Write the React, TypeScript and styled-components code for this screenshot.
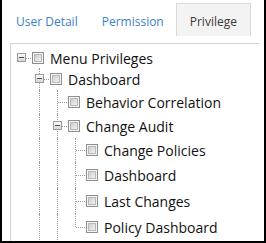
import React from 'react';
import styled, { createGlobalStyle, css } from 'styled-components';

const Global = createGlobalStyle`
  html, body { margin: 0; padding: 0; background: #fff; }
  body { font-family: 'Open Sans', 'Noto Sans', sans-serif; }
`;

const Frame = styled.div`
  width: 266px;
  height: 243px;
  box-sizing: border-box;
  border: 2px solid #000;
  border-top: none;
  background: #fff;
  display: flex;
  flex-direction: column;
  padding: 3px 0 0 2px;
  overflow: hidden;
`;

const TabBar = styled.div`
  display: flex;
  height: 33px;
  gap: 1px;
`;

const Tab = styled.div<{ $active?: boolean }>`
  display: flex;
  align-items: center;
  padding: 3px 10px 0 11px;
  box-sizing: border-box;
  font-size: 12px;
  color: #3b7fc4;
  border: 1px solid transparent;
  border-bottom: none;
  white-space: nowrap;
  ${(p) =>
    p.$active &&
    css`
      padding: 3px 13px 0;
      color: #3a3a3a;
      background: #f3f3f3;
      border-color: #d9d9d9;
    `}
`;

const Panel = styled.div`
  margin: 7px 0 0 6px;
  width: 249px;
  flex: 1;
  border-top: 1px solid #d4d4d4;
  border-left: 1px solid #d4d4d4;
  padding: 4px 0 0 1px;
  box-sizing: border-box;
`;

const Row = styled.div<{ $h: number }>`
  display: flex;
  align-items: stretch;
  height: ${(p) => p.$h}px;
`;

const Guide = styled.div<{ $on: boolean }>`
  width: 18px;
  flex: none;
  position: relative;
  ${(p) =>
    p.$on &&
    css`
      &::before {
        content: '';
        position: absolute;
        left: 9px;
        top: 0;
        bottom: 0;
        border-left: 1px dotted #9a9a9a;
      }
    `}
`;

const Stub = styled.div<{ $up: boolean; $down: boolean }>`
  width: 18px;
  flex: none;
  position: relative;
  &::before {
    content: '';
    position: absolute;
    left: 9px;
    top: ${(p) => (p.$up ? '0' : '50%')};
    bottom: ${(p) => (p.$down ? '0' : '50%')};
    border-left: 1px dotted #9a9a9a;
  }
  &::after {
    content: '';
    position: absolute;
    left: 10px;
    right: -1px;
    top: 50%;
    border-top: 1px dotted #9a9a9a;
  }
`;

const Expander = styled.span`
  position: absolute;
  z-index: 1;
  left: 5px;
  top: 50%;
  margin-top: -5px;
  width: 9px;
  height: 9px;
  box-sizing: border-box;
  border: 1px solid #9c9c9c;
  background: linear-gradient(#fbfbfb, #d6d6d6);
  &::after {
    content: '';
    position: absolute;
    left: 1px;
    top: 3px;
    width: 5px;
    height: 1px;
    background: #4d4d4d;
  }
`;

const Check = styled.span`
  align-self: center;
  flex: none;
  margin-left: 2px;
  width: 12px;
  height: 12px;
  box-sizing: border-box;
  border: 1px solid #8e8f8f;
  background: #f4f4f4;
  padding: 1px;
  &::after {
    content: '';
    display: block;
    width: 100%;
    height: 100%;
    box-sizing: border-box;
    border: 1px solid #b8b8b8;
    background: linear-gradient(135deg, #cfcfcf, #f1f1f1);
  }
`;

const Label = styled.span`
  align-self: center;
  margin-left: 6px;
  font-size: 14px;
  color: #111;
  white-space: nowrap;
`;

type TreeRow = {
  label: string;
  guides: boolean[];
  up: boolean;
  down: boolean;
  parent?: boolean;
  h: number;
};

const rows: TreeRow[] = [
  { label: 'Menu Privileges', guides: [], up: false, down: false, parent: true, h: 20 },
  { label: 'Dashboard', guides: [false], up: true, down: true, parent: true, h: 22 },
  { label: 'Behavior Correlation', guides: [false, true], up: true, down: true, h: 24 },
  { label: 'Change Audit', guides: [false, true], up: true, down: true, parent: true, h: 24 },
  { label: 'Change Policies', guides: [false, true, true], up: true, down: true, h: 24 },
  { label: 'Dashboard', guides: [false, true, true], up: true, down: true, h: 26 },
  { label: 'Last Changes', guides: [false, true, true], up: true, down: true, h: 26 },
  { label: 'Policy Dashboard', guides: [false, true, true], up: true, down: false, h: 26 },
];

export default function App() {
  return (
    <>
      <Global />
      <Frame>
        <TabBar>
          <Tab>User Detail</Tab>
          <Tab>Permission</Tab>
          <Tab $active>Privilege</Tab>
        </TabBar>
        <Panel>
          {rows.map((r, i) => (
            <Row key={i} $h={r.h}>
              {r.guides.map((g, j) => (
                <Guide key={j} $on={g} />
              ))}
              <Stub $up={r.up} $down={r.down}>
                {r.parent && <Expander />}
              </Stub>
              <Check />
              <Label>{r.label}</Label>
            </Row>
          ))}
        </Panel>
      </Frame>
    </>
  );
}
